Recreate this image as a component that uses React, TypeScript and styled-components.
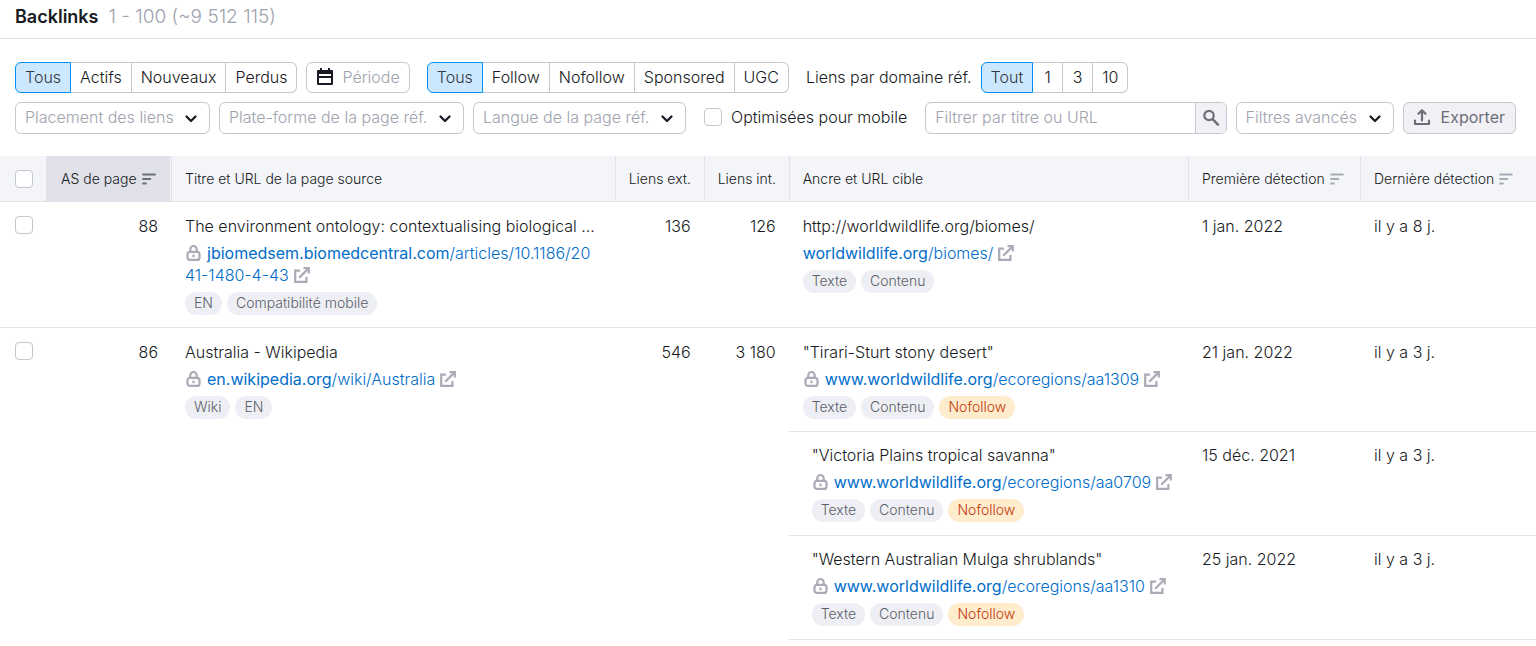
import React from 'react';
import styled, { createGlobalStyle, css } from 'styled-components';

const GlobalStyle = createGlobalStyle`
  *, *::before, *::after { box-sizing: border-box; }
  body {
    margin: 0;
    background: #fff;
    color: #171a22;
    font-family: Inter, "Liberation Sans", sans-serif;
    font-size: 16px;
    font-weight: 300;
    line-height: 22px;
  }
  button, input, select { font: inherit; color: inherit; margin: 0; }
`;

/* ---------- Icons ---------- */

const Svg = styled.svg`
  display: block;
  flex: none;
`;

const CalendarIcon = () => (
  <Svg width="18" height="18" viewBox="0 0 18 18" fill="#171a22" aria-hidden="true">
    <path
      fillRule="evenodd"
      d="M4 0h2v2h6V0h2v2h2a1 1 0 0 1 1 1v13a1 1 0 0 1-1 1H2a1 1 0 0 1-1-1V3a1 1 0 0 1 1-1h2zM3 6v2h12V6zM3 10v5h12v-5z"
    />
  </Svg>
);

const ChevronIcon = () => (
  <Svg width="14" height="14" viewBox="0 0 14 14" fill="none" stroke="#171a22" strokeWidth="2.300" strokeLinecap="round" strokeLinejoin="round" aria-hidden="true">
    <path d="M2.500 5.500 7 10 11.500 5.500" />
  </Svg>
);

const SearchIcon = () => (
  <Svg width="18" height="18" viewBox="0 0 18 18" fill="none" stroke="#6c6e79" aria-hidden="true">
    <circle cx="7" cy="6.500" r="4.700" strokeWidth="2.200" />
    <path d="m10.600 10.200 5.400 5.400" strokeWidth="2.600" strokeLinecap="round" />
  </Svg>
);

const UploadIcon = () => (
  <Svg width="18" height="18" viewBox="0 0 18 18" fill="none" stroke="#6c6e79" strokeWidth="2.200" strokeLinecap="round" strokeLinejoin="round" aria-hidden="true">
    <path d="M2 12.500V16h14v-3.500" />
    <path d="M9 12.500V3M5.500 5.800 9 2.300l3.500 3.500" />
  </Svg>
);

const SortIcon = ({ active = false }: { active?: boolean }) => (
  <Svg width="14" height="12" viewBox="0 0 14 12" fill="none" stroke={active ? '#6c6e79' : '#a9abb6'} strokeWidth="2.200" strokeLinecap="round" aria-hidden="true">
    <path d="M1.200 1.500h11.600M1.200 6h7M1.200 10.500h2.600" />
  </Svg>
);

const InlineSvg = styled.svg`
  display: inline-block;
  vertical-align: -2px;
`;

const LockMark = styled(InlineSvg)`
  margin-right: 6px;
`;

const LockIcon = () => (
  <LockMark width="16" height="16" viewBox="0 0 16 16" fill="none" stroke="#a9abb6" strokeWidth="2.200" role="img" aria-label="HTTPS">
    <rect x="2.500" y="6.800" width="12" height="8.100" rx="2.500" />
    <path d="M5.300 7V4.200a3.200 3.200 0 0 1 6.400 0V7" />
    <path d="M8.500 9.600v2.600" />
  </LockMark>
);

const ExternalMark = styled(InlineSvg)`
  margin-left: 5px;
`;

const ExternalIcon = () => (
  <ExternalMark width="16" height="16" viewBox="0 0 16 16" fill="none" stroke="#a9abb6" strokeWidth="2.200" aria-hidden="true">
    <path d="M6 3.600H1.200V14.800H12.400V10" />
    <path d="M5.200 10.800 14.600 1.400" />
    <path d="M9.500 1.200H14.800V6.500" />
  </ExternalMark>
);

/* ---------- Header and filters ---------- */

const PageHeader = styled.header`
  display: flex;
  align-items: center;
  gap: 10px;
  padding: 5px 15px 9px;
  border-bottom: 1px solid #e0e1e9;
  line-height: 24px;
`;

const Title = styled.h1`
  margin: 0;
  font-size: 18px;
  font-weight: 600;
`;

const Total = styled.span`
  color: #a0a2ae;
  font-size: 19px;
`;

const Filters = styled.form`
  display: flex;
  flex-direction: column;
  gap: 9px;
  padding: 23px 20px 22px 15px;
`;

const FilterRow = styled.div`
  display: flex;
  flex-wrap: wrap;
  align-items: center;
  gap: 9px;
`;

const Pills = styled.div<{ $spaced?: boolean }>`
  display: flex;
  margin-left: ${(p) => (p.$spaced ? 8 : 0)}px;
`;

const Pill = styled.button<{ $active?: boolean }>`
  height: 31px;
  min-width: 30px;
  padding: 0 9px 1px;
  border: 1px solid #c4c7cf;
  border-left-width: 0;
  background: #fff;
  line-height: 22px;
  cursor: pointer;

  &:last-child { border-radius: 0 6px 6px 0; }

  ${(p) =>
    p.$active &&
    css`
      border: 1px solid #008ff8;
      border-radius: 6px 0 0 6px;
      background: #cce8fe;
      color: #34363f;
    `}
`;

const control = css`
  height: 32px;
  border: 1px solid #c4c7cf;
  border-radius: 6px;
  background: #fff;
  color: #a0a2ae;
`;

const PeriodButton = styled.button`
  ${control}
  display: flex;
  align-items: center;
  gap: 8px;
  height: 31px;
  padding: 0 9px 1px;
  cursor: pointer;
`;

const GroupLabel = styled.span`
  margin-left: 8px;
  padding-bottom: 2px;
`;

const SelectBox = styled.div`
  display: grid;
  align-items: center;

  & > * { grid-area: 1 / 1; }
  & > svg { justify-self: end; margin-right: 12px; pointer-events: none; }
`;

const Select = styled.select`
  ${control}
  appearance: none;
  padding: 0 35px 2px 9px;
  cursor: pointer;
`;

const Checkbox = styled.input.attrs({ type: 'checkbox' })`
  appearance: none;
  display: block;
  flex: none;
  width: 18px;
  height: 18px;
  border: 1px solid #c4c7cf;
  border-radius: 4px;
  background: #fff;

  &:checked { border-color: #008ff8; background: #008ff8; }
`;

const CheckLabel = styled.label`
  display: flex;
  align-items: center;
  gap: 9px;
  margin: 0 9px;
  padding-bottom: 2px;
`;

const SearchBox = styled.div`
  ${control}
  display: flex;
  flex: 1;
  min-width: 220px;
  overflow: hidden;
`;

const SearchInput = styled.input`
  flex: 1;
  min-width: 0;
  padding: 0 9px 2px;
  border: 0;
  background: none;
  color: #171a22;
  outline: none;

  &::placeholder { color: #a0a2ae; opacity: 1; }
`;

const SearchButton = styled.button`
  display: flex;
  align-items: center;
  justify-content: center;
  width: 31px;
  padding: 0;
  border: 0;
  border-left: 1px solid #c4c7cf;
  background: #f1f1f5;
  cursor: pointer;
`;

const ExportButton = styled.button`
  ${control}
  display: flex;
  align-items: center;
  gap: 10px;
  padding: 0 10px 2px 9px;
  background: #f1f1f5;
  color: #6c6e79;
  font-weight: 400;
  cursor: pointer;
`;

/* ---------- Table ---------- */

const Table = styled.table`
  width: 100%;
  min-width: 1200px;
  table-layout: fixed;
  border-collapse: separate;
  border-spacing: 0;
`;

const Col = styled.col<{ $width?: string }>`
  width: ${(p) => p.$width ?? 'auto'};
`;

const Th = styled.th<{ $active?: boolean; $plain?: boolean }>`
  height: 46px;
  padding: 0 13px 0 ${(p) => (p.$plain || p.$active ? 15 : 13)}px;
  border-bottom: 1px solid #e0e1e9;
  border-left: ${(p) => (p.$plain || p.$active ? 0 : 1)}px solid #e0e1e9;
  background: #f4f5f9;
  font-size: 14px;
  font-weight: 300;
  line-height: 20px;
  text-align: left;
  white-space: nowrap;

  ${(p) =>
    p.$active &&
    css`
      border-right: 1px solid #f4f5f9;
      background: #e0e1e9;
    `}
`;

const HeadInner = styled.div`
  display: flex;
  align-items: center;
  gap: 5px;
`;

const Td = styled.td<{ $line?: boolean; $nested?: boolean }>`
  padding: ${(p) => (p.$nested ? '12px 13px 13px 14px' : '13px 13px 12px 14px')};
  border-bottom: ${(p) => (p.$line ? 1 : 0)}px solid #e0e1e9;
  text-align: left;
  vertical-align: top;
`;

const CheckTd = styled(Td)`
  padding-top: 14px;
  padding-left: 15px;
`;

const NumberTd = styled(Td)`
  text-align: right;
`;

const SourceTd = styled(Td)`
  padding-right: 16px;
`;

const TargetTd = styled(Td)`
  padding-left: ${(p) => (p.$nested ? 23 : 14)}px;
`;

const AnchorText = styled.div`
  overflow: hidden;
  text-overflow: ellipsis;
  white-space: nowrap;
`;

const UrlLine = styled.div`
  margin-top: 5px;
  word-break: break-all;
`;

const Url = styled.a`
  color: #006dca;
  text-decoration: none;

  &:hover { text-decoration: underline; }
`;

const Host = styled.span`
  font-weight: 400;
`;

const Tags = styled.div`
  display: flex;
  flex-wrap: wrap;
  gap: 5px;
  margin-top: 6px;
`;

const Tag = styled.span<{ $warn?: boolean }>`
  height: 23px;
  padding: 0 9px;
  border-radius: 12px;
  background: ${(p) => (p.$warn ? '#ffeccd' : '#eeeff4')};
  color: ${(p) => (p.$warn ? '#c33909' : '#5c5e69')};
  font-size: 14px;
  line-height: 22px;
`;

/* ---------- Data ---------- */

type Target = {
  text: string;
  secure: boolean;
  host: string;
  path: string;
  tags: string[];
  first: string;
  last: string;
};

type Backlink = {
  score: string;
  title: string;
  host: string;
  path: string;
  tags: string[];
  ext: string;
  int: string;
  targets: Target[];
  continues?: boolean;
};

const backlinks: Backlink[] = [
  {
    score: '88',
    title: 'The environment ontology: contextualising biological ...',
    host: 'jbiomedsem.biomedcentral.com',
    path: '/articles/10.1186/2041-1480-4-43',
    tags: ['EN', 'Compatibilité mobile'],
    ext: '136',
    int: '126',
    targets: [
      {
        text: 'http://worldwildlife.org/biomes/',
        secure: false,
        host: 'worldwildlife.org',
        path: '/biomes/',
        tags: ['Texte', 'Contenu'],
        first: '1 jan. 2022',
        last: 'il y a 8 j.',
      },
    ],
  },
  {
    score: '86',
    title: 'Australia - Wikipedia',
    host: 'en.wikipedia.org',
    path: '/wiki/Australia',
    tags: ['Wiki', 'EN'],
    ext: '546',
    int: '3 180',
    continues: true,
    targets: [
      {
        text: '"Tirari-Sturt stony desert"',
        secure: true,
        host: 'www.worldwildlife.org',
        path: '/ecoregions/aa1309',
        tags: ['Texte', 'Contenu', 'Nofollow'],
        first: '21 jan. 2022',
        last: 'il y a 3 j.',
      },
      {
        text: '"Victoria Plains tropical savanna"',
        secure: true,
        host: 'www.worldwildlife.org',
        path: '/ecoregions/aa0709',
        tags: ['Texte', 'Contenu', 'Nofollow'],
        first: '15 déc. 2021',
        last: 'il y a 3 j.',
      },
      {
        text: '"Western Australian Mulga shrublands"',
        secure: true,
        host: 'www.worldwildlife.org',
        path: '/ecoregions/aa1310',
        tags: ['Texte', 'Contenu', 'Nofollow'],
        first: '25 jan. 2022',
        last: 'il y a 3 j.',
      },
    ],
  },
];

/* ---------- Composite parts ---------- */

const PillGroup = ({ label, options, spaced }: { label: string; options: string[]; spaced?: boolean }) => {
  const [selected] = options;
  return (
    <Pills role="group" aria-label={label} $spaced={spaced}>
      {options.map((o) => (
        <Pill key={o} type="button" $active={o === selected} aria-pressed={o === selected}>
          {o}
        </Pill>
      ))}
    </Pills>
  );
};

const Dropdown = ({ label }: { label: string }) => (
  <SelectBox>
    <Select aria-label={label}>
      <option>{label}</option>
    </Select>
    <ChevronIcon />
  </SelectBox>
);

const UrlCell = ({ secure, host, path }: { secure: boolean; host: string; path: string }) => (
  <UrlLine>
    {secure && <LockIcon />}
    <Url href={`${secure ? 'https' : 'http'}://${host}${path}`}>
      <Host>{host}</Host>
      {path}
      <ExternalIcon />
    </Url>
  </UrlLine>
);

const TagList = ({ tags }: { tags: string[] }) => (
  <Tags>
    {tags.map((t) => (
      <Tag key={t} $warn={t === 'Nofollow'}>
        {t}
      </Tag>
    ))}
  </Tags>
);

const BacklinkRows = ({ item }: { item: Backlink }) => {
  const span = item.targets.length;
  const line = !item.continues;
  return (
    <tbody>
      {item.targets.map((t, i) => (
        <tr key={t.path}>
          {i === 0 && (
            <>
              <CheckTd rowSpan={span} $line={line}>
                <Checkbox aria-label={item.title} />
              </CheckTd>
              <NumberTd rowSpan={span} $line={line}>
                {item.score}
              </NumberTd>
              <SourceTd rowSpan={span} $line={line}>
                <AnchorText>{item.title}</AnchorText>
                <UrlCell secure host={item.host} path={item.path} />
                <TagList tags={item.tags} />
              </SourceTd>
              <NumberTd rowSpan={span} $line={line}>
                {item.ext}
              </NumberTd>
              <NumberTd rowSpan={span} $line={line}>
                {item.int}
              </NumberTd>
            </>
          )}
          <TargetTd $line $nested={i > 0}>
            <AnchorText>{t.text}</AnchorText>
            <UrlCell secure={t.secure} host={t.host} path={t.path} />
            <TagList tags={t.tags} />
          </TargetTd>
          <Td $line $nested={i > 0}>
            {t.first}
          </Td>
          <Td $line $nested={i > 0}>
            {t.last}
          </Td>
        </tr>
      ))}
    </tbody>
  );
};

export default function App() {
  return (
    <>
      <GlobalStyle />
      <PageHeader>
        <Title>Backlinks</Title>
        <Total>1 - 100 (~9 512 115)</Total>
      </PageHeader>
      <main>
        <Filters onSubmit={(e) => e.preventDefault()}>
          <FilterRow>
            <PillGroup label="Statut" options={['Tous', 'Actifs', 'Nouveaux', 'Perdus']} />
            <PeriodButton type="button">
              <CalendarIcon />
              Période
            </PeriodButton>
            <PillGroup label="Type de lien" options={['Tous', 'Follow', 'Nofollow', 'Sponsored', 'UGC']} spaced />
            <GroupLabel>Liens par domaine réf.</GroupLabel>
            <PillGroup label="Liens par domaine réf." options={['Tout', '1', '3', '10']} />
          </FilterRow>
          <FilterRow>
            <Dropdown label="Placement des liens" />
            <Dropdown label="Plate-forme de la page réf." />
            <Dropdown label="Langue de la page réf." />
            <CheckLabel>
              <Checkbox />
              Optimisées pour mobile
            </CheckLabel>
            <SearchBox>
              <SearchInput type="text" placeholder="Filtrer par titre ou URL" aria-label="Filtrer par titre ou URL" />
              <SearchButton type="submit" aria-label="Rechercher">
                <SearchIcon />
              </SearchButton>
            </SearchBox>
            <Dropdown label="Filtres avancés" />
            <ExportButton type="button">
              <UploadIcon />
              Exporter
            </ExportButton>
          </FilterRow>
        </Filters>
        <Table>
          <colgroup>
            <Col $width="46px" />
            <Col $width="125px" />
            <Col />
            <Col $width="89px" />
            <Col $width="85px" />
            <Col $width="26%" />
            <Col $width="172px" />
            <Col $width="176px" />
          </colgroup>
          <thead>
            <tr>
              <Th $plain>
                <Checkbox aria-label="Tout sélectionner" />
              </Th>
              <Th $active aria-sort="descending">
                <HeadInner>
                  AS de page
                  <SortIcon active />
                </HeadInner>
              </Th>
              <Th>Titre et URL de la page source</Th>
              <Th>Liens ext.</Th>
              <Th>Liens int.</Th>
              <Th>Ancre et URL cible</Th>
              <Th>
                <HeadInner>
                  Première détection
                  <SortIcon />
                </HeadInner>
              </Th>
              <Th>
                <HeadInner>
                  Dernière détection
                  <SortIcon />
                </HeadInner>
              </Th>
            </tr>
          </thead>
          {backlinks.map((b) => (
            <BacklinkRows key={b.host} item={b} />
          ))}
        </Table>
      </main>
    </>
  );
}
